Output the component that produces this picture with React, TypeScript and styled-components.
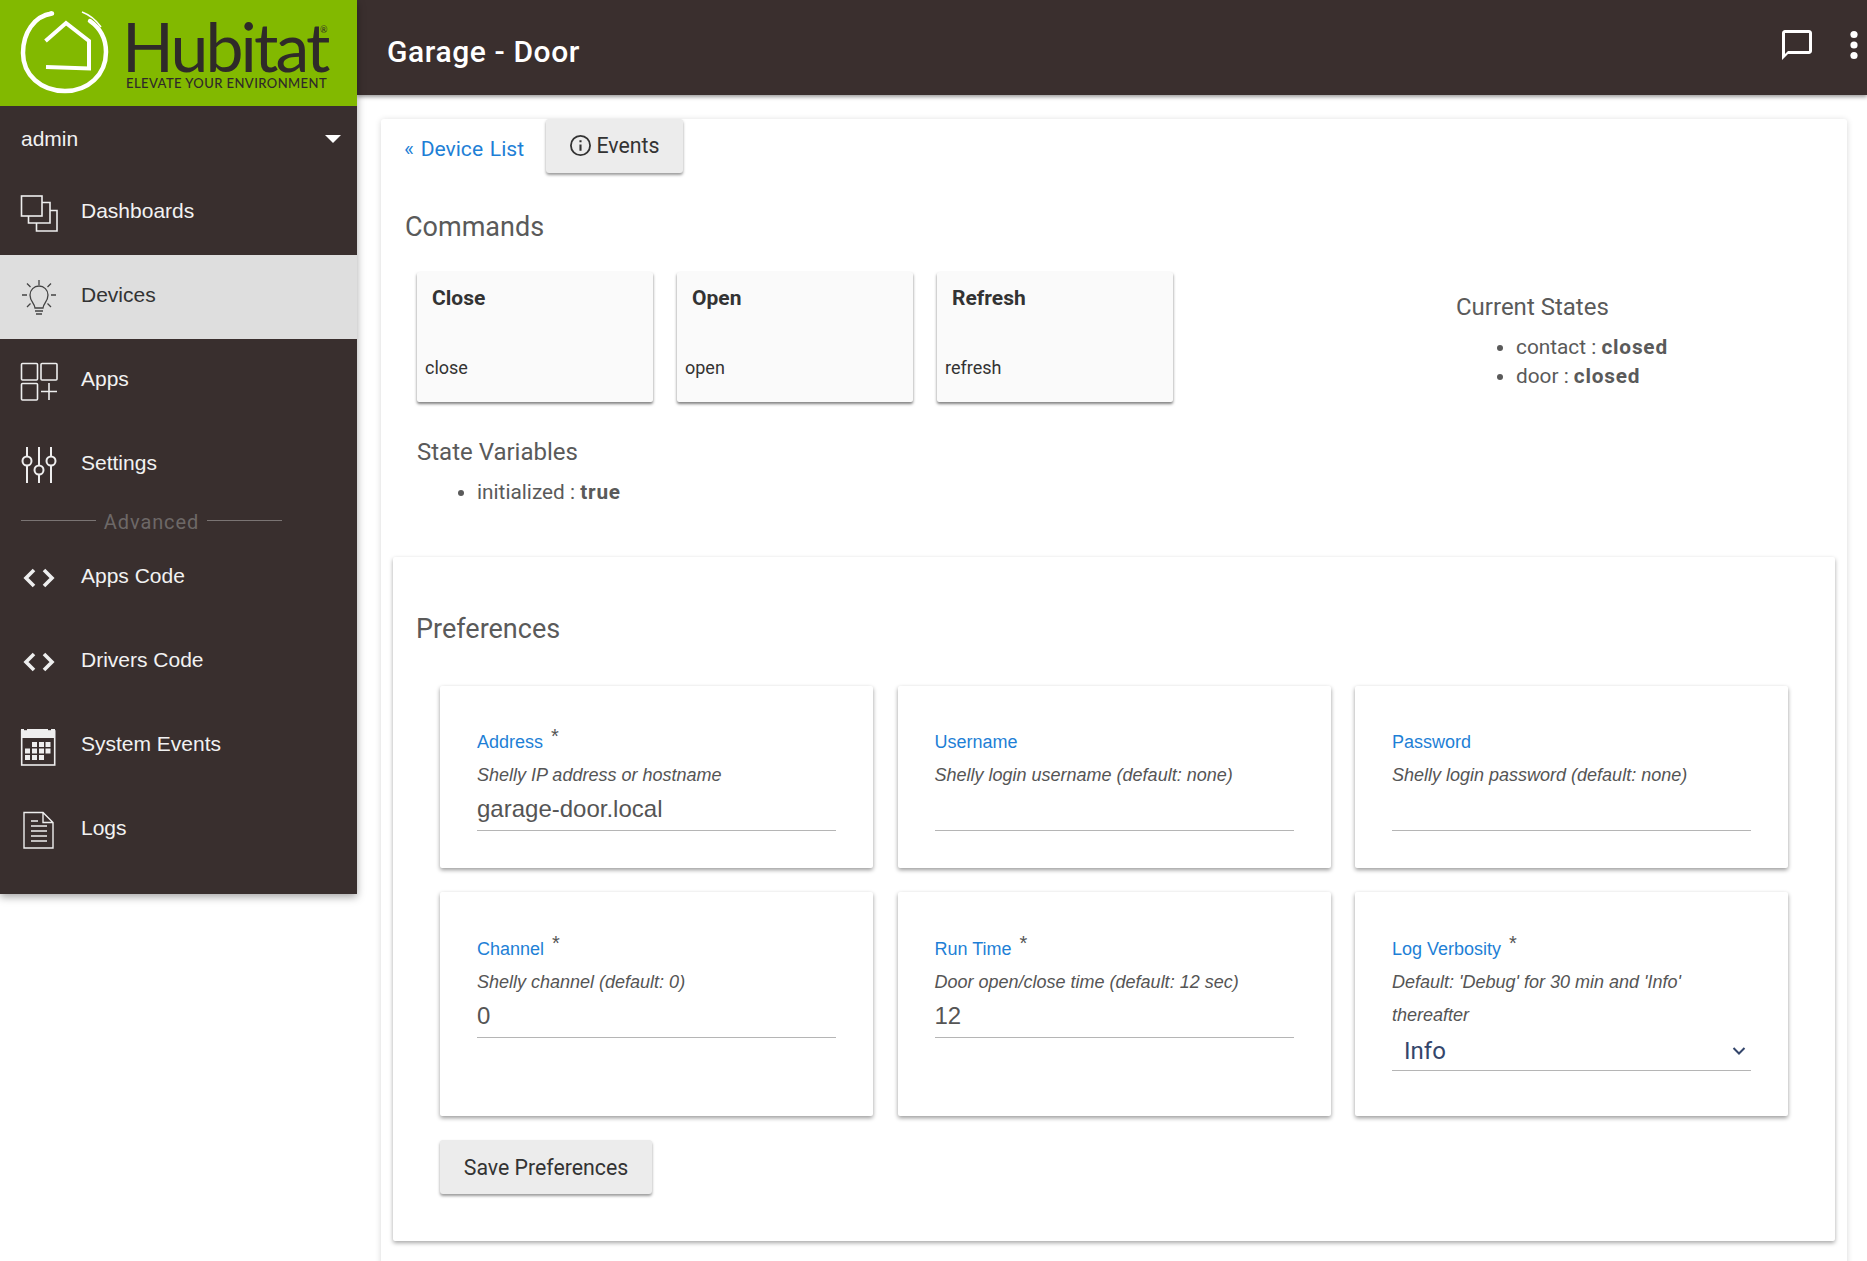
import React from "react";
import styled, { createGlobalStyle } from "styled-components";

const GlobalStyle = createGlobalStyle`
  html, body {
    margin: 0;
    padding: 0;
    background: #fff;
    font-family: Roboto, "Liberation Sans", sans-serif;
  }
  * {
    box-sizing: border-box;
  }
`;

type NavItem = {
  label: string;
  icon: React.ReactNode;
  active?: boolean;
};

const Logo = () => (
  <LogoWrap>
    <svg width="112" height="106" viewBox="0 0 112 106" fill="none">
      <path
        d="M52 13.5 C34 16 23 33 23 53 C23 75 41 91 65 91 C88 91 106 75 106 52 C106 38 100 28 90 21"
        stroke="#fff"
        strokeWidth="4.5"
        strokeLinecap="round"
      />
      <path d="M52 12 L44 15" stroke="#fff" strokeWidth="2" />
      <path d="M82 12 C90 15 96 20 101 27" stroke="#fff" strokeWidth="1.6" />
      <path
        d="M45.5 41 L66 23 L89 41 V68.5 L46 67"
        stroke="#fff"
        strokeWidth="4"
        strokeLinejoin="miter"
      />
    </svg>
    <LogoText>
      <LogoName>
        Hubitat<LogoMark>®</LogoMark>
      </LogoName>
      <LogoTag>ELEVATE YOUR ENVIRONMENT</LogoTag>
    </LogoText>
  </LogoWrap>
);

const Icon = ({ children, color = "#eee" }: { children: React.ReactNode; color?: string }) => (
  <svg width="40" height="40" viewBox="0 0 40 40" fill="none" stroke={color} strokeWidth="1.6">
    {children}
  </svg>
);

const codeIcon = (
  <Icon>
    <path d="M15 12 L7 20 L15 28 M25 12 L33 20 L25 28" strokeWidth="3.6" />
  </Icon>
);

const navTop: NavItem[] = [
  {
    label: "Dashboards",
    icon: (
      <Icon>
        <rect x="2.5" y="3" width="20.5" height="20" />
        <path d="M9.5 23 V30 H31 V9.5 H23" />
        <path d="M17.5 30 V38 H38 V17.5 H31" />
      </Icon>
    ),
  },
  {
    label: "Devices",
    active: true,
    icon: (
      <Icon color="#444">
        <path d="M20 3 V8 M3 18 H8 M32 18 H37 M8 6.5 L11.5 10 M32 6.5 L28.5 10 M8 30 L11.5 26.5 M32 30 L28.5 26.5" strokeWidth="1.3" />
        <path d="M16 31 C15.5 26 11 24.5 11 18 A9 9 0 0 1 29 18 C29 24.5 24.5 26 24 31 Z" strokeWidth="1.3" />
        <path d="M16 34 H24 M17 37 H23" strokeWidth="1.6" />
      </Icon>
    ),
  },
  {
    label: "Apps",
    icon: (
      <Icon>
        <rect x="2.5" y="2.5" width="16" height="16.5" rx="1" />
        <rect x="22" y="2.5" width="16" height="16.5" rx="1" />
        <rect x="2.5" y="22.5" width="16" height="16.5" rx="1" />
        <path d="M30 22 V39 M22 30.5 H38" />
      </Icon>
    ),
  },
  {
    label: "Settings",
    icon: (
      <Icon>
        <path d="M8 2 V11 M8 20.5 V38 M20 2 V20 M20 29.5 V38 M32 2 V11 M32 20.5 V38" strokeWidth="2" />
        <circle cx="8" cy="16" r="4.5" strokeWidth="2" />
        <circle cx="20" cy="25" r="4.5" strokeWidth="2" />
        <circle cx="32" cy="16" r="4.5" strokeWidth="2" />
      </Icon>
    ),
  },
];

const navAdvanced: NavItem[] = [
  { label: "Apps Code", icon: codeIcon },
  { label: "Drivers Code", icon: codeIcon },
  {
    label: "System Events",
    icon: (
      <Icon>
        <path d="M2 3 H5 V5 H8 V3 H29 V5 H32 V3 H36 V12 H2 Z" fill="#eee" stroke="none" />
        <rect x="2.7" y="5" width="33" height="34" />
        {[
          [13, 16],
          [20, 16],
          [26.5, 16],
          [6, 22.5],
          [13, 22.5],
          [20, 22.5],
          [26.5, 22.5],
          [6, 29],
          [13, 29],
          [20, 29],
        ].map(([x, y]) => (
          <rect key={`${x}-${y}`} x={x} y={y} width="5" height="5" fill="#eee" stroke="none" />
        ))}
      </Icon>
    ),
  },
  {
    label: "Logs",
    icon: (
      <Icon>
        <path d="M5 2.5 H24 L34 12.5 V38 H5 Z M24 2.5 V12.5 H34" strokeWidth="1.4" />
        <path d="M12 11 H19 M12 16 H28 M12 21 H28 M12 26 H28 M12 31 H28" strokeWidth="1.3" />
      </Icon>
    ),
  },
];

type Pref = {
  label: string;
  required?: boolean;
  hint: string;
  value?: string;
  select?: boolean;
  lower?: boolean;
};

const prefs: Pref[] = [
  { label: "Address", required: true, hint: "Shelly IP address or hostname", value: "garage-door.local" },
  { label: "Username", hint: "Shelly login username (default: none)" },
  { label: "Password", hint: "Shelly login password (default: none)" },
  { label: "Channel", required: true, hint: "Shelly channel (default: 0)", value: "0", lower: true },
  { label: "Run Time", required: true, hint: "Door open/close time (default: 12 sec)", value: "12", lower: true },
  {
    label: "Log Verbosity",
    required: true,
    hint: "Default: 'Debug' for 30 min and 'Info' thereafter",
    value: "Info",
    select: true,
    lower: true,
  },
];

const commands = [
  { title: "Close", name: "close" },
  { title: "Open", name: "open" },
  { title: "Refresh", name: "refresh" },
];

const NavRow = ({ item }: { item: NavItem }) => (
  <NavLink $active={item.active}>
    <NavIconBox>{item.icon}</NavIconBox>
    <NavLabel>{item.label}</NavLabel>
  </NavLink>
);

export default function App() {
  return (
    <Page>
      <GlobalStyle />
      <Sidebar>
        <Logo />
        <UserRow>
          <span>admin</span>
          <Caret />
        </UserRow>
        {navTop.map((item) => (
          <NavRow key={item.label} item={item} />
        ))}
        <Divider>Advanced</Divider>
        {navAdvanced.map((item) => (
          <NavRow key={item.label} item={item} />
        ))}
      </Sidebar>
      <Content>
        <Header>
          <Title>Garage - Door</Title>
          <HeaderIcons>
            <svg width="36" height="36" viewBox="0 0 24 24" fill="#fff">
              <path d="M20 2H4c-1.1 0-2 .9-2 2v18l4-4h14c1.1 0 2-.9 2-2V4c0-1.1-.9-2-2-2zm0 14H6l-2 2V4h16v12z" />
            </svg>
            <svg width="36" height="36" viewBox="0 0 24 24" fill="#fff">
              <circle cx="12" cy="5" r="2.4" />
              <circle cx="12" cy="12" r="2.4" />
              <circle cx="12" cy="19" r="2.4" />
            </svg>
          </HeaderIcons>
        </Header>
        <Main>
          <MainCard>
            <TopRow>
              <BackLink>« Device List</BackLink>
              <EventsButton>
                <svg width="23" height="23" viewBox="0 0 24 24" fill="none" stroke="#333" strokeWidth="1.9">
                  <circle cx="12" cy="12" r="10" />
                  <path d="M12 11 V17.5 M12 6.5 V8.5" strokeWidth="2.2" />
                </svg>
                Events
              </EventsButton>
            </TopRow>
            <CommandsTitle>Commands</CommandsTitle>
            <CommandsArea>
              <CommandList>
                {commands.map((c) => (
                  <CommandCard key={c.name}>
                    <CommandTitle>{c.title}</CommandTitle>
                    <CommandName>{c.name}</CommandName>
                  </CommandCard>
                ))}
              </CommandList>
              <States>
                <StatesTitle>Current States</StatesTitle>
                <BulletList>
                  <li>
                    contact : <b>closed</b>
                  </li>
                  <li>
                    door : <b>closed</b>
                  </li>
                </BulletList>
              </States>
            </CommandsArea>
            <VariablesTitle>State Variables</VariablesTitle>
            <BulletList>
              <li>
                initialized : <b>true</b>
              </li>
            </BulletList>
            <PrefsCard>
              <PrefsTitle>Preferences</PrefsTitle>
              <PrefGrid>
                {prefs.map((p) => (
                  <PrefCard key={p.label} $lower={p.lower}>
                    <PrefLabel>
                      {p.label}
                      {p.required && <Star>*</Star>}
                    </PrefLabel>
                    <PrefHint>{p.hint}</PrefHint>
                    {p.select ? (
                      <SelectBox>
                        {p.value}
                        <svg width="16" height="16" viewBox="0 0 16 16" fill="none" stroke="#34466b" strokeWidth="2">
                          <path d="M2.5 5 L8 10.5 L13.5 5" />
                        </svg>
                      </SelectBox>
                    ) : (
                      <InputBox>{p.value}</InputBox>
                    )}
                  </PrefCard>
                ))}
              </PrefGrid>
              <SaveButton>Save Preferences</SaveButton>
            </PrefsCard>
          </MainCard>
        </Main>
      </Content>
    </Page>
  );
}

const Page = styled.div`
  display: flex;
  height: 100vh;
  overflow: hidden;
`;

const Sidebar = styled.aside`
  width: 357px;
  flex: none;
  align-self: flex-start;
  background: #392f2e;
  padding-bottom: 22px;
  box-shadow: 0 3px 8px rgba(0, 0, 0, 0.35);
  position: relative;
  z-index: 2;
`;

const LogoWrap = styled.div`
  height: 106px;
  background: #82b900;
  display: flex;
`;

const LogoText = styled.div`
  margin-left: 10px;
  color: #2f2a29;
`;

const LogoName = styled.div`
  font-family: Lato, sans-serif;
  font-weight: 400;
  font-size: 68px;
  line-height: 60px;
  letter-spacing: -2.9px;
  margin-top: 16px;
  position: relative;
`;

const LogoMark = styled.span`
  position: absolute;
  top: 9px;
  left: 198px;
  font-size: 9px;
  line-height: 9px;
  letter-spacing: 0;
`;

const LogoTag = styled.div`
  font-family: Lato, sans-serif;
  font-weight: 500;
  font-size: 13px;
  line-height: 12px;
  letter-spacing: 0.43px;
  white-space: nowrap;
  margin: 1px 0 0 4px;
`;

const UserRow = styled.div`
  height: 65px;
  display: flex;
  align-items: center;
  justify-content: space-between;
  padding: 0 16px 0 21px;
  color: #f2f2f2;
  font-size: 21px;
  font-family: "Liberation Sans", sans-serif;
`;

const Caret = styled.i`
  width: 0;
  height: 0;
  border-left: 8px solid transparent;
  border-right: 8px solid transparent;
  border-top: 8px solid #fff;
`;

const NavLink = styled.a<{ $active?: boolean }>`
  display: flex;
  align-items: center;
  height: 84px;
  padding-left: 19px;
  background: ${(p) => (p.$active ? "#dedede" : "transparent")};
  color: ${(p) => (p.$active ? "#333" : "#f2f2f2")};
`;

const NavIconBox = styled.span`
  width: 40px;
  height: 40px;
  flex: none;
  display: block;
`;

const NavLabel = styled.span`
  margin-left: 22px;
  padding-bottom: 4px;
  font-family: "Liberation Sans", sans-serif;
  font-size: 21px;
`;

const Divider = styled.div`
  width: 261px;
  height: 29px;
  margin-left: 21px;
  display: flex;
  align-items: center;
  gap: 8px;
  color: #6d6867;
  font-size: 20px;
  letter-spacing: 0.9px;
  &::before,
  &::after {
    content: "";
    flex: 1;
    height: 1px;
    background: #7a7473;
    margin-top: -3px;
  }
`;

const Content = styled.div`
  flex: 1;
  min-width: 0;
  display: flex;
  flex-direction: column;
`;

const Header = styled.header`
  height: 95px;
  flex: none;
  background: #3a2f2e;
  display: flex;
  align-items: center;
  justify-content: space-between;
  padding-left: 30px;
  box-shadow: 0 2px 4px rgba(0, 0, 0, 0.4);
  position: relative;
  z-index: 1;
`;

const Title = styled.h1`
  margin: 8px 0 0;
  font-size: 30px;
  letter-spacing: 0.6px;
  font-weight: 500;
  color: #fff;
`;

const HeaderIcons = styled.div`
  display: flex;
  gap: 21px;
  margin-right: -5px;
  margin-top: -6px;
`;

const Main = styled.main`
  flex: 1;
  padding: 24px 20px 0 24px;
`;

const MainCard = styled.div`
  background: #fff;
  border-radius: 3px;
  box-shadow: 0 1px 6px rgba(0, 0, 0, 0.16);
  padding: 0 12px 60px;
`;

const TopRow = styled.div`
  display: flex;
  align-items: flex-start;
  padding-left: 11px;
`;

const BackLink = styled.a`
  width: 142px;
  flex: none;
  color: #1e7fd6;
  font-size: 21.1px;
  word-spacing: 1.5px;
  line-height: 30px;
  margin-top: 15px;
  white-space: nowrap;
`;

const EventsButton = styled.button`
  width: 137px;
  height: 54px;
  border: 0;
  border-radius: 3px;
  background: #ececec;
  color: #333;
  font-family: Roboto, sans-serif;
  font-size: 21.3px;
  font-weight: 400;
  display: flex;
  align-items: center;
  justify-content: center;
  gap: 4px;
  padding: 0 0 1px;
  box-shadow: 0 2px 3px rgba(0, 0, 0, 0.4);
`;

const CommandsTitle = styled.h2`
  margin: 37px 0 0 12px;
  font-size: 27px;
  line-height: 34px;
  font-weight: 400;
  color: #5a5a5a;
`;

const CommandsArea = styled.div`
  display: flex;
  margin-top: 28px;
`;

const CommandList = styled.div`
  display: flex;
  gap: 24px;
  padding-left: 24px;
`;

const CommandCard = styled.div`
  width: 236px;
  height: 130px;
  background: #fafafa;
  border-radius: 2px;
  box-shadow: 0 2px 3px rgba(0, 0, 0, 0.5);
  color: #333;
  padding: 13px 8px;
`;

const CommandTitle = styled.div`
  font-size: 21px;
  line-height: 26px;
  font-weight: 700;
  margin-left: 7px;
`;

const CommandName = styled.div`
  font-size: 18px;
  line-height: 26px;
  margin-top: 44px;
`;

const States = styled.div`
  margin-left: 283px;
  padding-top: 20px;
`;

const StatesTitle = styled.div`
  font-size: 24px;
  line-height: 30px;
  color: #5a5a5a;
`;

const BulletList = styled.ul`
  margin: 11px 0 0;
  padding: 0 0 0 60px;
  color: #5a5a5a;
  font-size: 20.8px;
  line-height: 29px;
  b {
    font-weight: 700;
    letter-spacing: 0.8px;
  }
`;

const VariablesTitle = styled.div`
  margin: 35px 0 0 24px;
  font-size: 24px;
  line-height: 30px;
  color: #5a5a5a;
  & + ul {
    padding-left: 84px;
    margin-top: 11px;
  }
`;

const PrefsCard = styled.section`
  margin-top: 50px;
  background: #fff;
  border-radius: 2px;
  box-shadow: 0 2px 4px rgba(0, 0, 0, 0.35);
  height: 684px;
  padding: 54px 23px 0 23px;
`;

const PrefsTitle = styled.h2`
  margin: 0;
  font-size: 27px;
  line-height: 36px;
  font-weight: 400;
  color: #5a5a5a;
`;

const PrefGrid = styled.div`
  display: grid;
  grid-template-columns: repeat(3, 433px);
  grid-template-rows: 182px 224px;
  gap: 24px 24.5px;
  margin: 39px 0 0 24px;
`;

const PrefCard = styled.div<{ $lower?: boolean }>`
  background: #fff;
  border-radius: 2px;
  box-shadow: 0 2px 4px rgba(0, 0, 0, 0.4);
  padding: ${(p) => (p.$lower ? "45px" : "44px")} 37px 0;
`;

const PrefLabel = styled.div`
  color: #1e7fd6;
  font-family: "Liberation Sans", sans-serif;
  font-size: 18px;
  line-height: 24px;
`;

const Star = styled.span`
  color: #555;
  margin-left: 8px;
  font-size: 20px;
  line-height: 0;
  position: relative;
  top: -5px;
`;

const PrefHint = styled.div`
  color: #555;
  font-family: "Liberation Sans", sans-serif;
  font-style: italic;
  font-size: 18px;
  line-height: 33px;
  margin-top: 5px;
`;

const InputBox = styled.div`
  height: 39px;
  line-height: 34px;
  border-bottom: 1px solid #b5b5b5;
  color: #555;
  font-family: "Liberation Sans", sans-serif;
  font-size: 24px;
`;

const SelectBox = styled.div`
  height: 39px;
  line-height: 36px;
  border-bottom: 1px solid #b5b5b5;
  color: #34466b;
  font-family: Roboto, sans-serif;
  font-size: 24px;
  padding: 0 4px 0 12px;
  display: flex;
  align-items: center;
  justify-content: space-between;
`;

const SaveButton = styled.button`
  margin: 24px 0 0 24px;
  width: 212px;
  height: 54px;
  border: 0;
  border-radius: 3px;
  background: #ececec;
  color: #333;
  font-family: Roboto, sans-serif;
  font-size: 21.3px;
  box-shadow: 0 2px 3px rgba(0, 0, 0, 0.4);
`;
